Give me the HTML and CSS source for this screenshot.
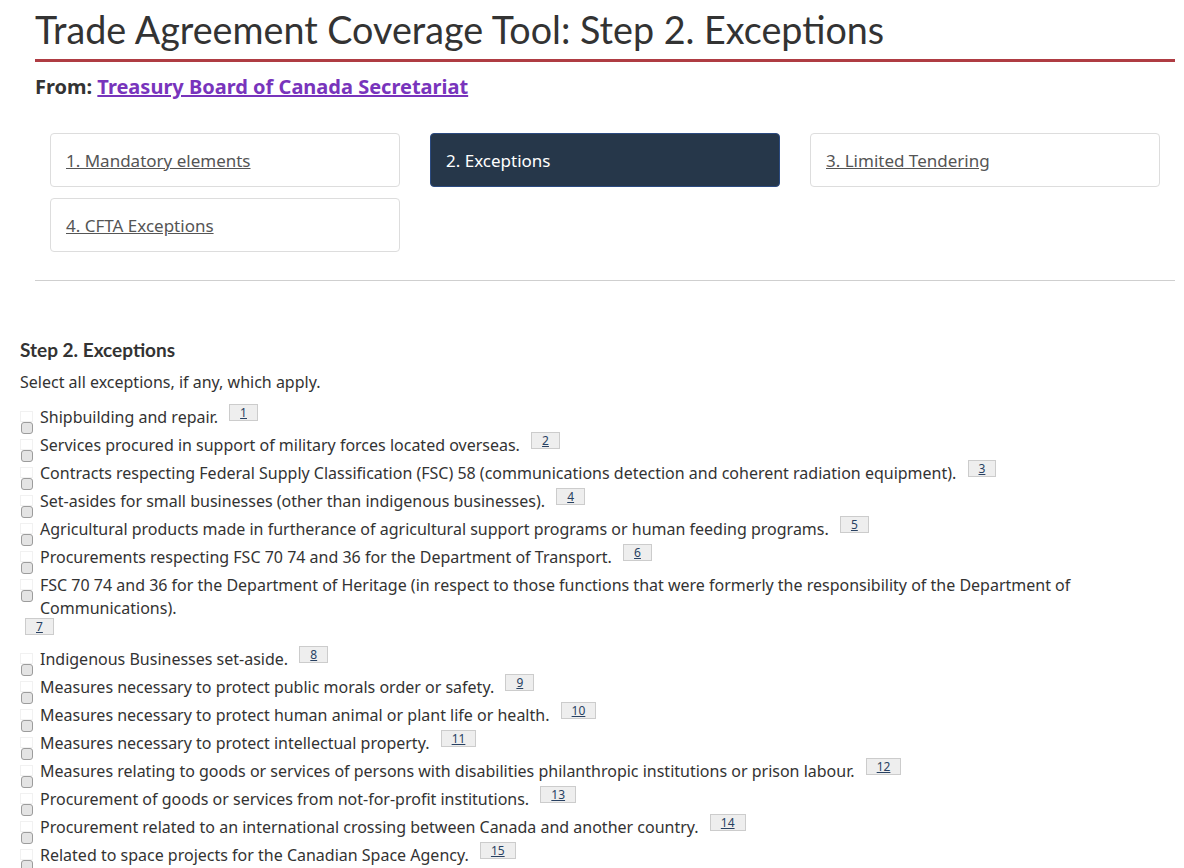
FILE: index.html
```html
<!DOCTYPE html>
<html lang="en">
<head>
<meta charset="utf-8">
<title>Trade Agreement Coverage Tool: Step 2. Exceptions</title>
<link rel="stylesheet" href="styles.css">
</head>
<body>
<div class="container">
  <h1 class="page-title">Trade Agreement Coverage Tool: Step 2. Exceptions</h1>
  <p class="byline">From: <a href="#">Treasury Board of Canada Secretariat</a></p>
  <nav class="steps">
    <a class="step" href="#"><span class="step-link">1. Mandatory elements</span></a>
    <a class="step active" href="#"><span class="step-link">2. Exceptions</span></a>
    <a class="step" href="#"><span class="step-link">3. Limited Tendering</span></a>
    <a class="step" href="#"><span class="step-link">4. CFTA Exceptions</span></a>
  </nav>
  <hr class="divider">
</div>
<form class="exceptions">
  <h2 class="section-title">Step 2. Exceptions</h2>
  <p class="intro">Select all exceptions, if any, which apply.</p>

  <div class="item"><span class="mark"><span class="ghost"></span><input type="checkbox"></span><span class="label">Shipbuilding and repair. <sup class="fn"><a href="#">1</a></sup></span></div>
  <div class="item"><span class="mark"><span class="ghost"></span><input type="checkbox"></span><span class="label">Services procured in support of military forces located overseas. <sup class="fn"><a href="#">2</a></sup></span></div>
  <div class="item"><span class="mark"><span class="ghost"></span><input type="checkbox"></span><span class="label">Contracts respecting Federal Supply Classification (FSC) 58 (communications detection and coherent radiation equipment). <sup class="fn"><a href="#">3</a></sup></span></div>
  <div class="item"><span class="mark"><span class="ghost"></span><input type="checkbox"></span><span class="label">Set-asides for small businesses (other than indigenous businesses). <sup class="fn"><a href="#">4</a></sup></span></div>
  <div class="item"><span class="mark"><span class="ghost"></span><input type="checkbox"></span><span class="label">Agricultural products made in furtherance of agricultural support programs or human feeding programs. <sup class="fn"><a href="#">5</a></sup></span></div>
  <div class="item"><span class="mark"><span class="ghost"></span><input type="checkbox"></span><span class="label">Procurements respecting FSC 70 74 and 36 for the Department of Transport. <sup class="fn"><a href="#">6</a></sup></span></div>
  <div class="item item-wrap"><span class="mark"><span class="ghost"></span><input type="checkbox"></span><span class="label">FSC 70 74 and 36 for the Department of Heritage (in respect to those functions that were formerly the responsibility of the Department of Communications).</span></div>
  <div class="fn-line"><sup class="fn"><a href="#">7</a></sup></div>
  <div class="item"><span class="mark"><span class="ghost"></span><input type="checkbox"></span><span class="label">Indigenous Businesses set-aside. <sup class="fn"><a href="#">8</a></sup></span></div>
  <div class="item"><span class="mark"><span class="ghost"></span><input type="checkbox"></span><span class="label">Measures necessary to protect public morals order or safety. <sup class="fn"><a href="#">9</a></sup></span></div>
  <div class="item"><span class="mark"><span class="ghost"></span><input type="checkbox"></span><span class="label">Measures necessary to protect human animal or plant life or health. <sup class="fn"><a href="#">10</a></sup></span></div>
  <div class="item"><span class="mark"><span class="ghost"></span><input type="checkbox"></span><span class="label">Measures necessary to protect intellectual property. <sup class="fn"><a href="#">11</a></sup></span></div>
  <div class="item"><span class="mark"><span class="ghost"></span><input type="checkbox"></span><span class="label">Measures relating to goods or services of persons with disabilities philanthropic institutions or prison labour. <sup class="fn"><a href="#">12</a></sup></span></div>
  <div class="item"><span class="mark"><span class="ghost"></span><input type="checkbox"></span><span class="label">Procurement of goods or services from not-for-profit institutions. <sup class="fn"><a href="#">13</a></sup></span></div>
  <div class="item"><span class="mark"><span class="ghost"></span><input type="checkbox"></span><span class="label">Procurement related to an international crossing between Canada and another country. <sup class="fn"><a href="#">14</a></sup></span></div>
  <div class="item"><span class="mark"><span class="ghost"></span><input type="checkbox"></span><span class="label">Related to space projects for the Canadian Space Agency. <sup class="fn"><a href="#">15</a></sup></span></div>
</form>
</body>
</html>
```
FILE: styles.css
```css
html, body {
  margin: 0;
  padding: 0;
  background: #fff;
}
body {
  font-family: "Noto Sans", "Open Sans", sans-serif;
  font-size: 16px;
  line-height: 23px;
  color: #333;
}
.container {
  width: 1140px;
  padding-left: 35px;
}
.page-title {
  font-family: Lato, "Noto Sans", sans-serif;
  font-weight: 400;
  font-size: 37.7px;
  line-height: 42px;
  color: #333;
  margin: 9px 0 0;
  padding-bottom: 8px;
  border-bottom: 3px solid #af3c43;
}
.byline {
  margin: 11px 0 0;
  font-size: 20px;
  line-height: 28px;
  font-weight: 700;
}
.byline a {
  color: #7834bc;
  text-decoration: underline;
}
.steps {
  margin-top: 32px;
  padding: 0 15px;
  display: grid;
  grid-template-columns: repeat(3, 350px);
  column-gap: 30px;
  row-gap: 11px;
}
.step {
  display: block;
  border: 1px solid #ddd;
  border-radius: 4px;
  padding: 16px 15px 14px;
  font-size: 17px;
  line-height: 22px;
  color: #555;
  text-decoration: none;
  background: #fff;
}
.step-link {
  text-decoration: underline;
}
.step.active {
  background: #26374a;
  border-color: #2b4a80;
  color: #fff;
}
.step.active .step-link {
  text-decoration: none;
}
.divider {
  margin: 28px 0 0;
  border: 0;
  border-top: 1px solid #cfcfcf;
  height: 0;
}
.exceptions {
  padding: 0 20px;
  margin-top: 57px;
}
.section-title {
  font-family: Lato, "Noto Sans", sans-serif;
  font-weight: 700;
  font-size: 19px;
  line-height: 23px;
  margin: 0;
}
.intro {
  margin: 10px 0 12px;
}
.item {
  display: flex;
  align-items: flex-start;
  height: 28px;
}
.item-wrap {
  height: auto;
}
.mark {
  flex: 0 0 20px;
  display: flex;
  flex-direction: column;
  padding-top: 5px;
}
.ghost {
  width: 11px;
  height: 9px;
  border: 1px solid #f1f1f1;
}
.mark input {
  appearance: none;
  -webkit-appearance: none;
  width: 12px;
  height: 12px;
  margin: 0 0 0 1px;
  border: 1px solid #9c9c9c;
  border-radius: 3px;
  background: #e4e4e4;
  box-sizing: border-box;
}
.label {
  flex: 1 1 auto;
}
.fn {
  font-size: 12px;
  line-height: 15px;
  vertical-align: 6px;
  display: inline-block;
  margin: -3px 0 0 7px;
}
.fn a {
  display: inline-block;
  padding: 0 10px;
  background: #eee;
  border: 1px solid #ccc;
  color: #284162;
  text-decoration: underline;
}
.fn-line {
  height: 28px;
}
.fn-line .fn {
  margin-left: 5px;
}
```
